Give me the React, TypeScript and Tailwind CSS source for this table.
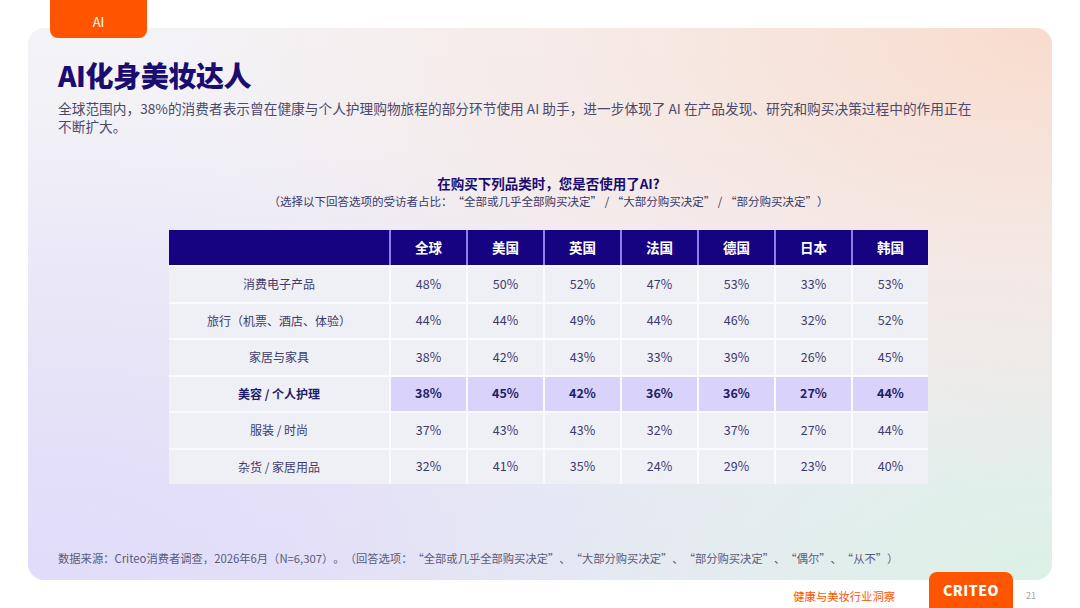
const countries = ['全球', '美国', '英国', '法国', '德国', '日本', '韩国'];

const rows: { label: string; values: number[]; highlight?: boolean }[] = [
  { label: '消费电子产品', values: [48, 50, 52, 47, 53, 33, 53] },
  { label: '旅行（机票、酒店、体验）', values: [44, 44, 49, 44, 46, 32, 52] },
  { label: '家居与家具', values: [38, 42, 43, 33, 39, 26, 45] },
  { label: '美容 / 个人护理', values: [38, 45, 42, 36, 36, 27, 44], highlight: true },
  { label: '服装 / 时尚', values: [37, 43, 43, 32, 37, 27, 44] },
  { label: '杂货 / 家居用品', values: [32, 41, 35, 24, 29, 23, 40] },
];

// full-width quoted phrase, like the CJK quote glyphs in the slide
function Q({ children }: { children: React.ReactNode }) {
  return (
    <>
      <span className="inline-block w-[1em] text-right">“</span>
      {children}
      <span className="inline-block w-[1em] text-left">”</span>
    </>
  );
}

function DataTable() {
  return (
    <div className="w-[759px] flex flex-col gap-[2px] bg-white/80">
      {/* Header */}
      <div className="grid grid-cols-[220px_repeat(7,1fr)] gap-[2px] bg-[#8d80ea] h-[35px]">
        <div className="bg-[#150381]" />
        {countries.map((c) => (
          <div key={c} className="bg-[#150381] flex items-center justify-center text-white font-bold text-[13.5px]">
            {c}
          </div>
        ))}
      </div>

      {/* Body */}
      {rows.map((row) => (
        <div key={row.label} className="grid grid-cols-[220px_repeat(7,1fr)] gap-[2px] h-[34.5px]">
          <div
            className={`bg-[#efeff6] flex items-center justify-center text-[12px] ${
              row.highlight ? 'font-bold text-[#221c66]' : 'text-[#3e3b6c]'
            }`}
          >
            {row.label}
          </div>
          {row.values.map((v, i) => (
            <div
              key={i}
              className={`flex items-center justify-center text-[12.5px] ${
                row.highlight ? 'bg-[#d9d2fb] font-bold text-[#221c66]' : 'bg-[#efeff6] text-[#3e3b6c]'
              }`}
            >
              {v}%
            </div>
          ))}
        </div>
      ))}
    </div>
  );
}

export default function App() {
  return (
    <div className="relative w-[1080px] h-[608px] bg-white overflow-hidden [text-spacing-trim:space-all] font-['Noto_Sans_CJK_SC','Noto_Sans',sans-serif]">
      {/* Section tab */}
      <div className="absolute left-[50px] top-0 z-10 w-[97px] h-[38px] rounded-b-[8px] bg-[#ff5500] flex items-center justify-center pt-[5px] text-white text-[13px]">
        AI
      </div>

      {/* Main card */}
      <div className="mx-[28px] mt-[28px] h-[552px] rounded-[16px] overflow-hidden flex flex-col px-[30px] pt-[31px] pb-[15px] bg-[radial-gradient(ellipse_at_100%_0%,#f8dccd_0%,rgba(248,228,218,0.6)_30%,transparent_60%),radial-gradient(ellipse_at_100%_100%,#dcf1e6_0%,rgba(226,242,234,0.5)_25%,transparent_50%),radial-gradient(ellipse_at_0%_100%,#e1dcf9_0%,transparent_60%),linear-gradient(180deg,#f4f3f6_0%,#eeedf6_55%,#e8e6f6_100%)]">
        <h1 className="text-[28px] leading-[33px] font-black text-[#1b0c72] tracking-[-0.4px]">AI化身美妆达人</h1>
        <p className="mt-[7px] text-[13.7px] leading-[18px] text-[#4c4a6c] whitespace-nowrap">
          全球范围内，38%的消费者表示曾在健康与个人护理购物旅程的部分环节使用 AI 助手，进一步体现了 AI 在产品发现、研究和购买决策过程中的作用正在
          <br />
          不断扩大。
        </p>

        <div className="flex flex-col items-center mt-[39px] pl-[82px] pr-[65px]">
          <div className="text-[13.5px] leading-[18px] font-bold text-[#1b0c72]">在购买下列品类时，您是否使用了AI?</div>
          <div className="mt-[1px] text-[11.5px] leading-[16px] text-[#3b386a] whitespace-nowrap">
            （选择以下回答选项的受访者占比：<Q>全部或几乎全部购买决定</Q> / <Q>大部分购买决定</Q> / <Q>部分购买决定</Q>）
          </div>
          <div className="mt-[21px]">
            <DataTable />
          </div>
        </div>

        <div className="mt-auto text-[11.3px] leading-[14px] text-[#5b5a7a] whitespace-nowrap">
          数据来源：Criteo消费者调查，2026年6月（N=6,307）。（回答选项：<Q>全部或几乎全部购买决定</Q>、<Q>大部分购买决定</Q>、
          <Q>部分购买决定</Q>、<Q>偶尔</Q>、<Q>从不</Q>）
        </div>
      </div>

      {/* Bottom strip */}
      <div className="h-[28px] flex items-center justify-end pr-[44px] gap-[34px]">
        <span className="text-[11.3px] text-[#ff5500] mt-[4px] mr-[97px]">健康与美妆行业洞察</span>
        <span className="text-[9px] text-[#a3a3a3] mt-[4px]">21</span>
      </div>

      {/* Logo */}
      <div className="absolute left-[929px] top-[572px] w-[84px] h-[36px] rounded-t-[8px] bg-[#ff5500] flex items-center justify-center">
        <span className="text-white font-black text-[14px] tracking-[0.5px]">CRITEO</span>
      </div>
    </div>
  );
}
